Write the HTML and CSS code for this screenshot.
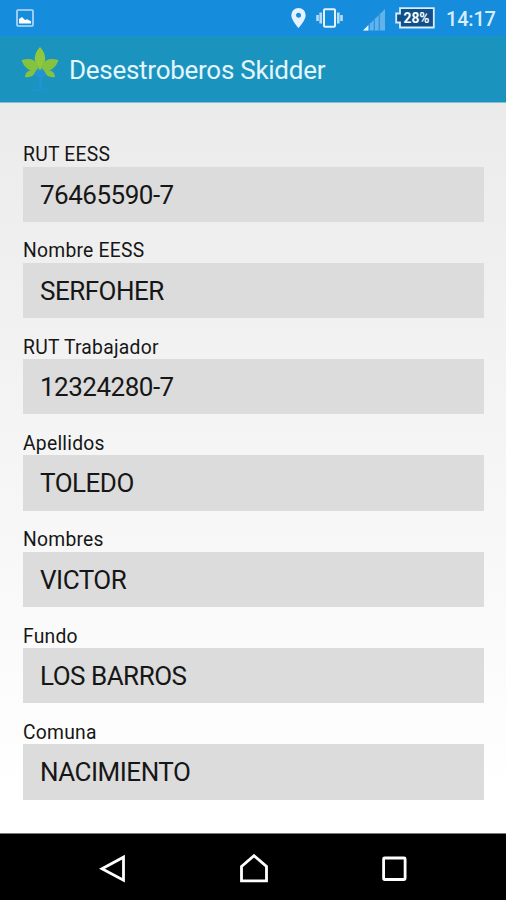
FILE: index.html
```html
<!DOCTYPE html>
<html lang="es">
<head>
    <meta charset="UTF-8">
    <meta name="viewport" content="width=device-width, initial-scale=1.0">
    <title>Desestroberos Skidder</title>
    <link rel="stylesheet" href="styles.css">
</head>
<body>
    <div class="status-bar">
        <svg class="icon-picture" width="18" height="18" viewBox="0 0 18 18">
            <rect x="1" y="1" width="16" height="16" rx="1" fill="none" stroke="#b9dcfa" stroke-width="1.6"/>
            <path d="M3 14.500V10l3-2L9 11l2-.8 4 2v2.300z" fill="#fff"/>
        </svg>
        <div class="status-icons">
            <svg width="15" height="20" viewBox="0 0 15 20">
                <path fill="#e4f3ff" fill-rule="evenodd" d="M7.500 0A7.200 7.200 0 0 0 .3 7.200C.3 12.200 7.500 20 7.500 20s7.200-7.800 7.200-12.800A7.200 7.200 0 0 0 7.500 0zm0 4.700a2.500 2.500 0 1 1 0 5 2.500 2.500 0 0 1 0-5z"/>
            </svg>
            <svg class="icon-vibrate" width="27" height="20" viewBox="0 0 27 20">
                <rect x="8" y="1.200" width="11" height="17.600" rx="1" fill="none" stroke="#e4f3ff" stroke-width="2"/>
                <path d="M4.700 4.500v11M22.300 4.500v11M1.500 7v6M25.500 7v6" stroke="#b5dcfa" stroke-width="2.600"/>
            </svg>
            <svg class="icon-signal" width="22" height="22" viewBox="0 0 22 22">
                <path d="M0 21.500L22 0v21.500z" fill="#62b3ec"/>
                <path d="M0 21.500l5.500-5.400v5.400z" fill="#e4f3ff"/>
                <path d="M6.300 14v8M11.300 9v13M16.300 4v18" stroke="#2c93df" stroke-width="1.300"/>
            </svg>
            <svg class="icon-battery" width="40" height="22" viewBox="0 0 40 22">
                <path d="M5 1.200h33.800v19.300H5v-5H1.200v-9H5z" fill="#10508a" stroke="#d8ecfc" stroke-width="1.800"/>
                <text x="21.500" y="16" text-anchor="middle" textLength="26" lengthAdjust="spacingAndGlyphs" class="battery-text">28%</text>
            </svg>
            <span class="clock">14:17</span>
        </div>
    </div>

    <div class="action-bar">
        <svg class="logo" width="38" height="46" viewBox="0 0 38 46">
            <path d="M19 1c-4 4-7 11-4 16l4 8 4-8c3-5 0-12-4-16z" fill="#8fc83c"/>
            <path d="M.5 14c7-2 14-1 16 5l1 7C9 26 3 22 .5 14zM37.500 14c-7-2-14-1-16 5l-1 7c8.500 0 14.500-4 17-12z" fill="#84c23f"/>
            <path d="M4 31c0-5 5-8 11-6-2 5-6 7-11 6zM34 31c0-5-5-8-11-6 2 5 6 7 11 6z" fill="#84c23f"/>
            <path d="M16 23l3 2 3-2 3 5-4 4v11h-3V32l-5-4z" fill="#2391d5"/>
            <path d="M8 44h22" stroke="#2391d5" stroke-width="1.500"/>
        </svg>
        <h1>Desestroberos Skidder</h1>
    </div>

    <div class="form">
        <div class="field">
            <label>RUT EESS</label>
            <div class="value">76465590-7</div>
        </div>
        <div class="field">
            <label>Nombre EESS</label>
            <div class="value">SERFOHER</div>
        </div>
        <div class="field">
            <label>RUT Trabajador</label>
            <div class="value">12324280-7</div>
        </div>
        <div class="field">
            <label>Apellidos</label>
            <div class="value">TOLEDO</div>
        </div>
        <div class="field">
            <label>Nombres</label>
            <div class="value">VICTOR</div>
        </div>
        <div class="field">
            <label>Fundo</label>
            <div class="value">LOS BARROS</div>
        </div>
        <div class="field">
            <label>Comuna</label>
            <div class="value">NACIMIENTO</div>
        </div>
    </div>

    <div class="nav-bar">
        <svg width="28" height="30" viewBox="0 0 28 30">
            <path d="M24.500 3.200v23L3 14.700z"/>
        </svg>
        <svg width="30" height="30" viewBox="0 0 30 30">
            <path d="M2.500 12.500L15 1.700l12.500 10.800v14.300h-25z"/>
        </svg>
        <svg width="28" height="30" viewBox="0 0 28 30">
            <rect x="2.600" y="4" width="21.500" height="21.500" rx="1"/>
        </svg>
    </div>
</body>
</html>
```
FILE: styles.css
```css
* {
    box-sizing: border-box;
}

body {
    font-family: Roboto, sans-serif;
    margin: 0;
    height: 900px;
    display: flex;
    flex-direction: column;
    overflow: hidden;
    color: #161616;
}

.status-bar {
    display: flex;
    justify-content: space-between;
    height: 36px;
    padding: 0 11px 0 16px;
    background-color: #158cdc;
}

.icon-picture {
    margin-top: 9px;
}

.status-icons {
    display: flex;
    align-items: center;
}

.icon-vibrate {
    margin-left: 10px;
}

.icon-signal {
    margin-left: 20px;
    margin-top: 3px;
}

.icon-battery {
    margin-left: 10px;
}

.battery-text {
    font-size: 15px;
    font-weight: 700;
    fill: #fff;
}

.clock {
    width: 49px;
    margin-left: 11px;
    padding-top: 2px;
    font-size: 20px;
    font-weight: 500;
    letter-spacing: -0.2px;
    color: #d9eefd;
    white-space: nowrap;
}

.action-bar {
    display: flex;
    align-items: center;
    height: 67px;
    padding: 0 21px;
    background-color: #1a94be;
    border-bottom: 1px solid #82bfd4;
}

.logo {
    margin-right: 10px;
}

h1 {
    margin: 2px 0 0;
    font-size: 26px;
    font-weight: 400;
    letter-spacing: -0.27px;
    color: #e3f5fd;
    white-space: nowrap;
}

.form {
    flex: 1;
    padding: 38px 22px 0 23px;
    background: linear-gradient(#ebebeb, #fff 95%);
}

.field {
    height: 96.33px;
}

label {
    display: block;
    height: 25.5px;
    font-size: 19.3px;
    line-height: 27.5px;
    letter-spacing: 0.25px;
}

.value {
    height: 55.3px;
    padding-left: 17px;
    font-size: 26px;
    line-height: 57.5px;
    letter-spacing: -0.5px;
    background-color: #dcdcdc;
}

.nav-bar {
    display: flex;
    justify-content: space-between;
    align-items: center;
    height: 67px;
    padding: 4px 97px 0 99px;
    background-color: #000;
    border-top: 1px solid #777;
}

.nav-bar svg {
    fill: none;
    stroke: #fff;
    stroke-width: 2.8;
}
```
